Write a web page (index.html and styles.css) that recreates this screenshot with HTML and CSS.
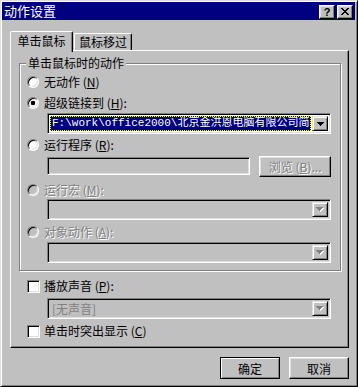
FILE: index.html
```html
<html>
<head>
    <link rel="stylesheet" href="styles.css">
</head>
<body>
    <div class="window">
        <div class="titlebar">
            <span class="title">动作设置</span>
            <div class="title-buttons">
                <span class="tbtn help">?</span>
                <span class="tbtn close">
                    <svg width="8" height="7" viewBox="0 0 8 7" shape-rendering="crispEdges"><path d="M0 0h2v1H0zM6 0h2v1H6zM1 1h2v1H1zM5 1h2v1H5zM2 2h4v1H2zM3 3h2v1H3zM2 4h4v1H2zM1 5h2v1H1zM5 5h2v1H5zM0 6h2v1H0zM6 6h2v1H6z" fill="#000"/></svg>
                </span>
            </div>
        </div>
        <div class="content">
            <div class="tabs">
                <div class="tab active">单击鼠标</div>
                <div class="tab">鼠标移过</div>
            </div>
            <div class="panel">
                <div class="group">
                    <div class="group-title">单击鼠标时的动作</div>

                    <div class="option r1"><span class="radio"></span>无动作 (<u>N</u>)</div>
                    <div class="option r2"><span class="radio checked"></span>超级链接到 (<u>H</u>):</div>
                    <div class="combo c1">
                        <div class="field">
                            <div class="selection">F:\work\office2000\北京金洪恩电脑有限公司简</div>
                        </div>
                        <div class="drop">
                            <svg width="7" height="4" viewBox="0 0 7 4" shape-rendering="crispEdges"><path d="M0 0h7v1H0zM1 1h5v1H1zM2 2h3v1H2zM3 3h1v1H3z" fill="#000"/></svg>
                        </div>
                    </div>

                    <div class="option r3"><span class="radio"></span>运行程序 (<u>R</u>):</div>
                    <div class="prog-row">
                        <div class="edit"></div>
                        <div class="btn browse disabled">浏览 (<u>B</u>)...</div>
                    </div>

                    <div class="option r4 disabled"><span class="radio"></span>运行宏 (<u>M</u>):</div>
                    <div class="combo c2 disabled">
                        <div class="field"></div>
                        <div class="drop">
                            <svg width="8" height="5" viewBox="0 0 8 5" shape-rendering="crispEdges"><path d="M1 1h7v1H1zM2 2h5v1H2zM3 3h3v1H3zM4 4h1v1H4z" fill="#fff"/><path d="M0 0h7v1H0zM1 1h5v1H1zM2 2h3v1H2zM3 3h1v1H3z" fill="#808080"/></svg>
                        </div>
                    </div>

                    <div class="option r5 disabled"><span class="radio"></span>对象动作 (<u>A</u>):</div>
                    <div class="combo c3 disabled">
                        <div class="field"></div>
                        <div class="drop">
                            <svg width="8" height="5" viewBox="0 0 8 5" shape-rendering="crispEdges"><path d="M1 1h7v1H1zM2 2h5v1H2zM3 3h3v1H3zM4 4h1v1H4z" fill="#fff"/><path d="M0 0h7v1H0zM1 1h5v1H1zM2 2h3v1H2zM3 3h1v1H3z" fill="#808080"/></svg>
                        </div>
                    </div>
                </div>

                <div class="option check1"><span class="checkbox"></span>播放声音 (<u>P</u>):</div>
                <div class="combo sound disabled">
                    <div class="field"><span class="placeholder">[无声音]</span></div>
                    <div class="drop">
                        <svg width="8" height="5" viewBox="0 0 8 5" shape-rendering="crispEdges"><path d="M1 1h7v1H1zM2 2h5v1H2zM3 3h3v1H3zM4 4h1v1H4z" fill="#fff"/><path d="M0 0h7v1H0zM1 1h5v1H1zM2 2h3v1H2zM3 3h1v1H3z" fill="#808080"/></svg>
                    </div>
                </div>
                <div class="option check2"><span class="checkbox"></span>单击时突出显示 (<u>C</u>)</div>
            </div>

            <div class="buttons">
                <div class="btn default">确定</div>
                <div class="btn">取消</div>
            </div>
        </div>
    </div>
</body>
</html>
```
FILE: styles.css
```css
body {
    margin: 0;
    font-family: "Noto Sans CJK SC", "Liberation Sans", sans-serif;
    font-size: 12px;
    color: #000;
    background-color: #c0c0c0;
}
.window {
    width: 358px;
    height: 387px;
    box-sizing: border-box;
    background-color: #c0c0c0;
    border: 1px solid;
    border-color: #dfdfdf #000 #000 #dfdfdf;
    box-shadow: inset 1px 1px #fff, inset -1px -1px #808080;
    padding: 1px 2px 2px 1px;
}
.titlebar {
    height: 18px;
    background-color: #000080;
    color: #fff;
    display: flex;
    align-items: center;
    justify-content: space-between;
    padding: 0 2px 0 2px;
    line-height: 18px;
}
.title {
    font-size: 13px;
}
.title-buttons {
    display: flex;
    gap: 2px;
    margin-top: 1px;
}
.tbtn {
    width: 16px;
    height: 14px;
    box-sizing: border-box;
    background-color: #c0c0c0;
    border: 1px solid;
    border-color: #fff #000 #000 #fff;
    box-shadow: inset -1px -1px #808080, inset 1px 1px #dfdfdf;
    display: flex;
    align-items: center;
    justify-content: center;
    color: #000;
}
.tbtn.help {
    font-family: "Liberation Sans", sans-serif;
    font-weight: bold;
    font-size: 11px;
    line-height: 12px;
}
.content {
    padding: 11px 6px 0 8px;
}
.tabs {
    display: flex;
    align-items: flex-end;
    height: 19px;
}
.tab {
    height: 17px;
    width: 58px;
    box-sizing: border-box;
    border: 1px solid;
    border-bottom: none;
    border-color: #fff #000 transparent #fff;
    border-radius: 2px 2px 0 0;
    box-shadow: inset -1px 0 #808080;
    text-align: center;
    line-height: 16px;
    margin-left: 1px;
}
.tab.active {
    position: relative;
    z-index: 1;
    width: 63px;
    height: 21px;
    margin-left: 0;
    margin-bottom: -2px;
    background-color: #c0c0c0;
    line-height: 18px;
}
.panel {
    width: 339px;
    height: 298px;
    box-sizing: border-box;
    border: 1px solid;
    border-color: #fff #000 #000 #fff;
    box-shadow: inset -1px -1px #808080;
    padding: 12px 0 0 8px;
}
.group {
    width: 322px;
    box-sizing: border-box;
    border: 1px solid #808080;
    box-shadow: inset 1px 1px #fff, 1px 1px #fff;
    padding: 0 9px 7px 7px;
}
.group-title {
    display: inline-block;
    margin: -8px 0 0 -1px;
    padding: 0 2px;
    height: 14px;
    line-height: 14px;
    background-color: #c0c0c0;
    vertical-align: top;
}
.option {
    display: flex;
    align-items: center;
    height: 16px;
    line-height: 16px;
    white-space: nowrap;
}
.option u {
    text-decoration: underline;
}
.r1 { margin-top: 4px; }
.r2 { margin-top: 5px; }
.combo.c1 { margin-top: 2px; }
.r3 { margin-top: 3px; }
.prog-row { margin-top: 3px; }
.r4 { margin-top: 5px; }
.combo.c2 { margin-top: 1px; }
.r5 { margin-top: 4px; }
.combo.c3 { margin-top: 2px; }
.check1 { margin-top: 7px; margin-left: 8px; }
.combo.sound { margin-top: 4px; margin-left: 28px; }
.check2 { margin-top: 4px; margin-left: 8px; }

.radio {
    width: 12px;
    height: 12px;
    box-sizing: border-box;
    border-radius: 50%;
    border: 1px solid;
    border-color: #808080 #fff #fff #808080;
    box-shadow: inset 1px 1px #000, inset -1px -1px #dfdfdf;
    background-color: #fff;
    margin-right: 5px;
    flex-shrink: 0;
}
.radio.checked {
    background: radial-gradient(circle, #000 2px, #fff 2.6px);
}
.option.disabled {
    color: #808080;
    text-shadow: 1px 1px 0 #fff;
}
.option.disabled .radio {
    background-color: #c0c0c0;
}
.checkbox {
    width: 13px;
    height: 13px;
    box-sizing: border-box;
    border: 1px solid;
    border-color: #808080 #fff #fff #808080;
    box-shadow: inset 1px 1px #000, inset -1px -1px #dfdfdf;
    background-color: #fff;
    margin-right: 4px;
    flex-shrink: 0;
}
.combo {
    width: 284px;
    height: 21px;
    box-sizing: border-box;
    margin-left: 20px;
    display: flex;
    border: 1px solid;
    border-color: #808080 #fff #fff #808080;
    box-shadow: inset 1px 1px #000, inset -1px -1px #dfdfdf;
    padding: 2px;
    background-color: #fff;
}
.combo.disabled {
    background-color: #c0c0c0;
}
.combo .field {
    flex: 1;
    overflow: hidden;
    min-width: 0;
}
.selection {
    height: 15px;
    box-sizing: border-box;
    background-color: #000080;
    color: #fff;
    border: 1px dotted #ffff00;
    font-family: "Liberation Mono", "Noto Sans CJK SC", monospace;
    font-size: 11px;
    line-height: 13px;
    white-space: nowrap;
    overflow: hidden;
    padding-left: 1px;
    margin-right: 1px;
}
.placeholder {
    color: #808080;
    line-height: 15px;
    padding-left: 2px;
}
.drop {
    width: 16px;
    height: 15px;
    box-sizing: border-box;
    border: 1px solid;
    border-color: #dfdfdf #000 #000 #dfdfdf;
    box-shadow: inset 1px 1px #fff, inset -1px -1px #808080;
    background-color: #c0c0c0;
    display: flex;
    align-items: center;
    justify-content: center;
}
.prog-row {
    display: flex;
    align-items: flex-start;
    margin-left: 20px;
}
.edit {
    width: 204px;
    height: 18px;
    margin-top: 1px;
    box-sizing: border-box;
    border: 1px solid;
    border-color: #808080 #fff #fff #808080;
    box-shadow: inset 1px 1px #000, inset -1px -1px #dfdfdf;
    background-color: #c0c0c0;
}
.btn {
    width: 60px;
    height: 22px;
    box-sizing: border-box;
    border: 1px solid;
    border-color: #fff #000 #000 #fff;
    box-shadow: inset -1px -1px #808080, inset 1px 1px #dfdfdf;
    display: flex;
    align-items: center;
    justify-content: center;
    background-color: #c0c0c0;
}
.btn.default {
    border-color: #000;
    box-shadow: inset 1px 1px #fff, inset -1px -1px #808080;
}
.browse {
    width: 72px;
    height: 21px;
    margin-left: 9px;
    white-space: nowrap;
}
.btn.disabled {
    color: #808080;
    text-shadow: 1px 1px 0 #fff;
}
.buttons {
    display: flex;
    justify-content: flex-end;
    gap: 9px;
    margin-top: 9px;
}
```
